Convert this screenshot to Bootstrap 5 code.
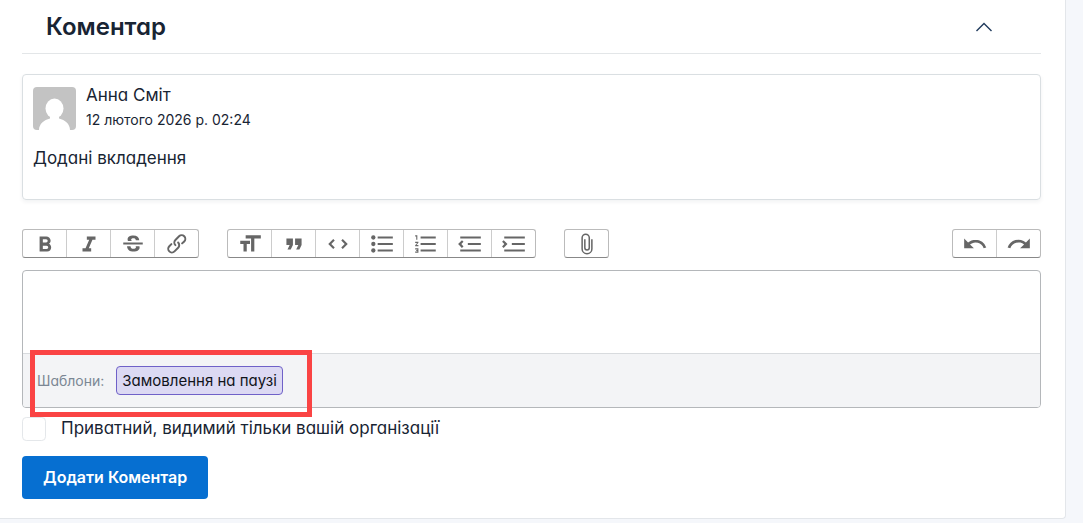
<!DOCTYPE html>
<html lang="uk">
<head>
<meta charset="utf-8">
<meta name="viewport" content="width=device-width, initial-scale=1">
<title>Коментар</title>
<link href="https://cdn.jsdelivr.net/npm/bootstrap@5.3.0/dist/css/bootstrap.min.css" rel="stylesheet">
<style>
  body { background: #f5f7fb; color: #182433; font-family: Inter, "Noto Sans", sans-serif; font-size: 17px; line-height: 24px; font-feature-settings: "cv11"; }
  .panel { background: #fff; border: solid #e3e6ea; border-width: 0 1px 1px 0; border-radius: 0 0 4px 0; margin-right: 17px; padding: 0 24px 19px 22px; }
  .panel-head { height: 54px; border-bottom: 1px solid #e3e6e8; padding: 0 47px 0 24px; margin-bottom: 20px; }
  .panel-head h2 { font-size: 24px; line-height: 32px; font-weight: 600; }
  .toggle { color: #1f3a5c; }
  .comment { border: 1px solid #dadfe2; border-radius: 4px; box-shadow: 0 2px 4px rgba(24, 36, 51, .06); padding: 8px 10px 29px; margin-bottom: 29px; }
  .comment .author { gap: 10px; }
  .avatar { border-radius: 4px; margin-top: 4px; }
  .when { font-size: 14px; line-height: 26px; }
  .message { margin: 13px 0 0; }
  .toolbar { gap: 28px; margin-bottom: 12px; }
  .tools { border: 1px solid #bbb; border-bottom-color: #888; border-radius: 3px; }
  .tools button { width: 43px; height: 27px; box-sizing: content-box; border: 0; background: none; padding: 0; color: #666; display: flex; align-items: center; justify-content: center; }
  .tools button + button { border-left: 1px solid #ccc; }
  .tools svg { width: 26px; height: 26px; fill: currentColor; }
  .editor { border: 1px solid #b4b7ba; border-radius: 4px; margin-bottom: 9px; }
  .editor textarea { height: 82px; border: 0; resize: none; display: block; }
  .templates { background: #f3f4f6; border-top: 1px solid #d8dbde; padding: 12px 14px; border-radius: 0 0 3px 3px; }
  .marked { gap: 12px; }
  .marked::after { content: ""; position: absolute; inset: -16px -29px -22px -7px; border: 5px solid #fa4444; pointer-events: none; }
  .hint { color: #7b8794; font-size: 14px; }
  .chip { border: 1px solid #6f61c8; border-radius: 4px; background: #dcd9f3; color: #10131a; font-size: 15px; font-feature-settings: inherit; line-height: 27px; padding: 0 5px; }
  .private { gap: 15px; margin-bottom: 15px; }
  .private label { padding-bottom: 2px; line-height: 22px; }
  .private .form-check-input { width: 24px; height: 24px; border-color: #e4e7ea; margin: 0; }
  .submit { background: #066fd1; border: 0; border-radius: 4px; color: #fff; font-size: 16px; font-weight: 600; line-height: 24px; padding: 9px 21px 10px; }
</style>
</head>
<body>
<main class="panel">
  <header class="panel-head d-flex align-items-center justify-content-between">
    <h2 class="m-0">Коментар</h2>
    <button class="toggle btn p-0 border-0 d-flex" type="button" aria-label="Згорнути">
      <svg width="20" height="20" viewBox="0 0 20 20" fill="none" stroke="currentColor" stroke-width="1.4"><path d="M2.500 14 10 6.500 17.500 14"/></svg>
    </button>
  </header>

  <article class="comment">
    <div class="author d-flex">
      <svg class="avatar flex-shrink-0" width="43" height="43" viewBox="0 0 43 43"><path fill="#c3c3c3" d="M0 0h43v43H0z"/><ellipse cx="21.500" cy="21.500" rx="9" ry="10" fill="#fff"/><path fill="#fff" d="M6 43c0-6 5-10 11-11.500V28h9v3.500C32 33 37 37 37 43z"/></svg>
      <div>
        <div>Анна Сміт</div>
        <div class="when">12 лютого 2026 р. 02:24</div>
      </div>
    </div>
    <p class="message">Додані вкладення</p>
  </article>

  <div class="toolbar d-flex" role="toolbar">
    <div class="tools d-flex">
      <button type="button" aria-label="Жирний"><svg viewBox="0 0 24 24"><path d="M15.600 11.800c1-.7 1.600-1.800 1.600-2.800a4 4 0 0 0-4-4H7v14h7c2.100 0 3.700-1.700 3.700-3.800 0-1.500-.8-2.800-2.100-3.400zM10 7.500h3a1.500 1.500 0 1 1 0 3h-3v-3zm3.500 9H10v-3h3.500a1.500 1.500 0 1 1 0 3z"/></svg></button>
      <button type="button" aria-label="Курсив"><svg viewBox="0 0 24 24"><path d="M10 5v3h2.200l-3.400 8H6v3h8v-3h-2.200l3.400-8H18V5h-8z"/></svg></button>
      <button type="button" aria-label="Закреслений"><svg viewBox="0 0 24 24"><path d="M12.300 4.200c3.300 0 5.300 1.500 5.500 4.300h-3.200c-.2-1.200-.9-1.700-2.300-1.700-1.200 0-2 .5-2 1.300 0 .5.200.9.800 1.200H7.400c-.3-.5-.4-.9-.4-1.500 0-2.200 2.100-3.600 5.300-3.600zM3 10.500h18v2H3zM6.500 14h3.200c.2 1.700 1.100 2.400 2.700 2.400 1.500 0 2.300-.5 2.300-1.400 0-.4-.1-.7-.3-1h3.500c.2.400.2.800.2 1.300 0 2.300-2.200 3.700-5.500 3.700-3.700 0-5.900-1.700-6.100-5z"/></svg></button>
      <button type="button" aria-label="Посилання"><svg viewBox="0 0 24 24"><path d="M9.880 13.700a4.300 4.300 0 0 1 0-6.070l3.370-3.370a4.260 4.260 0 0 1 6.070 0 4.300 4.300 0 0 1 0 6.060l-1.960 1.720a.91.91 0 1 1-1.300-1.300l1.970-1.710a2.460 2.460 0 0 0-3.480-3.480l-3.380 3.370a2.460 2.460 0 0 0 0 3.480.91.91 0 1 1-1.300 1.300z"/><path d="M4.250 19.460a4.300 4.300 0 0 1 0-6.070l1.930-1.900a.91.91 0 1 1 1.300 1.300l-1.930 1.900a2.460 2.460 0 0 0 3.480 3.480l3.370-3.380c.96-.96.96-2.520 0-3.480a.91.91 0 1 1 1.300-1.300 4.300 4.300 0 0 1 0 6.070l-3.380 3.380a4.260 4.260 0 0 1-6.070 0z"/></svg></button>
    </div>
    <div class="tools d-flex">
      <button type="button" aria-label="Заголовок"><svg viewBox="0 0 24 24"><path d="M12 9v3H9v7H6v-7H3V9h9zM8 4h14v3h-6v12h-3V7H8V4z"/></svg></button>
      <button type="button" aria-label="Цитата"><svg viewBox="0 0 24 24"><path d="M6 17h3l2-4V7H5v6h3zm8 0h3l2-4V7h-6v6h3z"/></svg></button>
      <button type="button" aria-label="Код"><svg viewBox="0 0 24 24"><path d="M18.200 12L15 15.200l1.400 1.400L21 12l-4.600-4.600L15 8.800l3.200 3.200zM5.800 12L9 8.800 7.600 7.400 3 12l4.600 4.600L9 15.200 5.800 12z"/></svg></button>
      <button type="button" aria-label="Список"><svg viewBox="0 0 24 24"><path d="M8 5h14v2H8zM8 11h14v2H8zM8 17h14v2H8z"/><circle cx="4" cy="6" r="2"/><circle cx="4" cy="12" r="2"/><circle cx="4" cy="18" r="2"/></svg></button>
      <button type="button" aria-label="Нумерований список"><svg viewBox="0 0 24 24"><path d="M2 17h2v.5H3v1h1v.5H2v1h3v-4H2v1zm1-9h1V4H2v1h1v3zm-1 3h1.800L2 13.100v.9h3v-1H3.200L5 10.900V10H2v1zm5-6v2h14V5H7zm0 14h14v-2H7v2zm0-6h14v-2H7v2z"/></svg></button>
      <button type="button" aria-label="Зменшити відступ"><svg viewBox="0 0 24 24"><path d="M3 19h19v-2H3v2zm7-6h12v-2H10v2zm-8.300-.3l2.800 2.900L6 14.200 4 12l2-2-1.400-1.500L1 12l.7.7zM3 5v2h19V5H3z"/></svg></button>
      <button type="button" aria-label="Збільшити відступ"><svg viewBox="0 0 24 24"><path d="M3 19h19v-2H3v2zm7-6h12v-2H10v2zm-6.900-1L1 14.200l1.400 1.400L6 12l-.7-.7-2.800-2.800L1 9.900 3.100 12zM3 5v2h19V5H3z"/></svg></button>
    </div>
    <div class="tools d-flex">
      <button type="button" aria-label="Вкласти файл"><svg viewBox="0 0 24 24"><path d="M16.500 7.500v9a4.500 4.500 0 0 1-9 0V6.300a3.300 3.300 0 0 1 6.600 0v9.200a2.050 2.050 0 0 1-4.100 0V7.500" fill="none" stroke="currentColor" stroke-width="1.400"/></svg></button>
    </div>
    <div class="tools d-flex ms-auto">
      <button type="button" aria-label="Скасувати"><svg viewBox="0 0 24 24"><path d="M12.500 8c-2.600 0-5 1-6.900 2.600L2 7v9h9l-3.600-3.600A8 8 0 0 1 20 16l2.400-.8a10.500 10.500 0 0 0-10-7.200z"/></svg></button>
      <button type="button" aria-label="Повторити"><svg viewBox="0 0 24 24"><path d="M18.400 10.600a10.500 10.500 0 0 0-16.900 4.600L4 16a8 8 0 0 1 12.700-3.600L13 16h9V7l-3.600 3.600z"/></svg></button>
    </div>
  </div>

  <div class="editor">
    <textarea class="form-control shadow-none" aria-label="Текст коментаря"></textarea>
    <div class="templates d-flex">
      <div class="marked d-flex align-items-center position-relative">
        <span class="hint">Шаблони:</span>
        <button class="chip" type="button">Замовлення на паузі</button>
      </div>
    </div>
  </div>

  <div class="private d-flex align-items-center">
    <input class="form-check-input" type="checkbox" id="private">
    <label for="private">Приватний, видимий тільки вашій організації</label>
  </div>
  <button class="submit" type="submit">Додати Коментар</button>
</main>
<script src="https://cdn.jsdelivr.net/npm/bootstrap@5.3.0/dist/js/bootstrap.bundle.min.js"></script>
</body>
</html>
